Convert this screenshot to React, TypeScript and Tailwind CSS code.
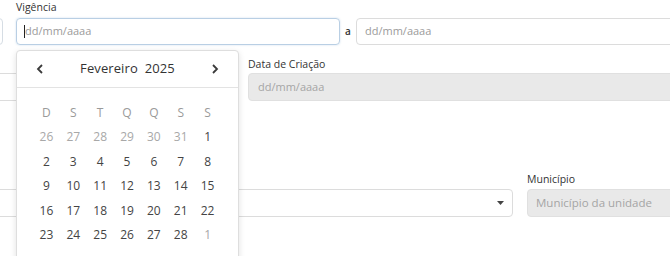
import React from 'react'

const WEEKDAYS = ['D', 'S', 'T', 'Q', 'Q', 'S', 'S']

// dias de fevereiro/2025 com sobras dos meses vizinhos
const DAYS: { n: number; muted: boolean }[] = [
  ...[26, 27, 28, 29, 30, 31].map(n => ({ n, muted: true })),
  ...Array.from({ length: 28 }, (_, i) => ({ n: i + 1, muted: false })),
  { n: 1, muted: true },
]

function Chevron({ dir }: { dir: 'left' | 'right' }) {
  return (
    <svg width="8" height="10" viewBox="0 0 8 10" fill="none">
      <polyline
        points={dir === 'left' ? '6,1 2,5 6,9' : '2,1 6,5 2,9'}
        stroke="#3a3a3a"
        strokeWidth="1.8"
      />
    </svg>
  )
}

function Calendar() {
  return (
    <div className="absolute left-[16px] top-[50px] w-[223px] h-[230px] bg-white border border-[#dedede] rounded-[4px] shadow-[0_2px_6px_rgba(0,0,0,0.12)]">
      <div className="h-[37px] border-b border-[#e3e3e3] flex items-center justify-between px-[19px]">
        <Chevron dir="left" />
        <span className="text-[13px] text-[#333] tracking-[0.1px]">Fevereiro&nbsp;&nbsp;2025</span>
        <Chevron dir="right" />
      </div>
      <div className="ml-[16px] mt-[13px] w-[188px] grid grid-cols-7 text-center text-[12px]">
        {WEEKDAYS.map((d, i) => (
          <div key={i} className="h-[24.4px] leading-[24px] text-[#9a9a9a]">{d}</div>
        ))}
        {DAYS.map((d, i) => (
          <div
            key={i}
            className={`h-[24.4px] leading-[24px] ${d.muted ? 'text-[#a8a8a8]' : 'text-[#444]'}`}
          >
            {d.n}
          </div>
        ))}
      </div>
    </div>
  )
}

export default function App() {
  return (
    <div
      className="relative w-[670px] h-[256px] overflow-hidden bg-white"
      style={{ fontFamily: '"Open Sans", "Noto Sans", sans-serif' }}
    >
      {/* linha 1 */}
      <div className="flex items-end h-[45px]">
        <div className="ml-[-20px] w-[23px] h-[27px] border border-[#d6dde4] rounded-[4px] bg-white" />
        <div className="ml-[13px] w-[324px] flex flex-col">
          <label className="text-[10.5px] font-medium text-[#333] leading-[14px] mb-[4px]">Vigência</label>
          <div className="h-[27px] border border-[#b9cfe4] rounded-[4px] shadow-[0_0_2px_rgba(100,150,200,0.35)] flex items-center pl-[7px]">
            <span className="w-px h-[13px] bg-[#222]" />
            <span className="text-[11px] text-[#9b9b9b]">dd/mm/aaaa</span>
          </div>
        </div>
        <span className="w-[16px] h-[27px] flex items-center justify-center text-[10px] font-semibold text-[#333]">a</span>
        <div className="flex-1 mr-[-10px] h-[27px] border border-[#dcdcdc] rounded-[4px] flex items-center pl-[8px]">
          <span className="text-[11px] text-[#9b9b9b]">dd/mm/aaaa</span>
        </div>
      </div>

      {/* linha 2 */}
      <div className="flex items-end mt-[14px] h-[42px]">
        <div className="w-[220px] h-[28px] border border-[#dcdcdc] rounded-[4px] bg-white ml-[-10px]" />
        <div className="ml-[38px] flex-1 mr-[-10px] flex flex-col">
          <label className="text-[10.5px] font-medium text-[#333] leading-[14px] mb-[2px]">Data de Criação</label>
          <div className="h-[28px] bg-[#e9e9e9] border border-[#e0e0e0] rounded-[4px] flex items-center pl-[9px]">
            <span className="text-[11px] text-[#a5a5a5]">dd/mm/aaaa</span>
          </div>
        </div>
      </div>

      {/* linha 3 */}
      <div className="flex items-end mt-[71px] h-[45px]">
        <div className="ml-[-10px] w-[523px] h-[28px] border border-[#dcdcdc] rounded-[4px] bg-white flex items-center justify-end pr-[8px]">
          <svg width="7" height="4" viewBox="0 0 7 4">
            <polygon points="0,0 7,0 3.5,4" fill="#444" />
          </svg>
        </div>
        <div className="ml-[14px] flex-1 mr-[-10px] flex flex-col">
          <label className="text-[10.5px] font-medium text-[#333] leading-[14px] mb-[3px]">Município</label>
          <div className="h-[28px] bg-[#e9e9e9] border border-[#e0e0e0] rounded-[4px] flex items-center pl-[8px]">
            <span className="text-[11.5px] text-[#a5a5a5]">Município da unidade</span>
          </div>
        </div>
      </div>

      <Calendar />
    </div>
  )
}
